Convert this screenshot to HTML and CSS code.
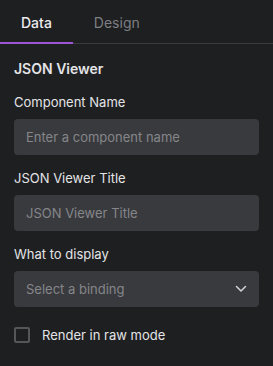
FILE: index.html
```html
<!DOCTYPE html>
<html lang="en">
<head>
    <meta charset="UTF-8">
    <meta name="viewport" content="width=device-width, initial-scale=1.0">
    <title>JSON Viewer</title>
    <link rel="stylesheet" href="styles.css">
</head>
<body>
    <div class="tabs">
        <div class="tab active">Data</div>
        <div class="tab">Design</div>
    </div>
    <div class="panel">
        <div class="heading">JSON Viewer</div>
        <div class="field">
            <label class="label">Component Name</label>
            <input class="input" type="text" placeholder="Enter a component name">
        </div>
        <div class="field">
            <label class="label">JSON Viewer Title</label>
            <input class="input" type="text" placeholder="JSON Viewer Title">
        </div>
        <div class="field">
            <label class="label">What to display</label>
            <div class="select">
                <span>Select a binding</span>
                <svg width="12" height="8" viewBox="0 0 12 8"><path d="M1.5 1.5 L6 6 L10.5 1.5" fill="none" stroke="#d4d4d8" stroke-width="1.5" stroke-linecap="round" stroke-linejoin="round"/></svg>
            </div>
        </div>
        <div class="check">
            <span class="box"></span>
            <span>Render in raw mode</span>
        </div>
    </div>
</body>
</html>
```

FILE: styles.css
```css
body {
    margin: 0;
    background-color: #1e1f21;
    color: #e4e4e7;
    font-family: Inter, "Noto Sans", sans-serif;
    font-size: 13px;
}
.tabs {
    display: flex;
    border-bottom: 1px solid #3a3b3e;
    height: 43px;
}
.tab {
    padding: 0 21px;
    line-height: 46px;
    font-size: 14px;
    font-weight: 400;
    color: #7d7e82;
}
.tab.active {
    color: #ececee;
    font-weight: 500;
    border-bottom: 2px solid #9b55d6;
    margin-bottom: -1px;
}
.panel {
    padding: 16px 14px;
}
.heading {
    font-size: 14px;
    font-weight: 600;
    color: #e4e4e7;
    margin-bottom: 17px;
}
.field {
    display: flex;
    flex-direction: column;
    margin-bottom: 15px;
}
.label {
    font-size: 13px;
    margin-bottom: 9px;
}
.input, .select {
    box-sizing: border-box;
    height: 36px;
    border: none;
    border-radius: 4px;
    background-color: #393a3e;
    padding: 0 12px;
    font-family: inherit;
    font-size: 13px;
    color: #e4e4e7;
    outline: none;
}
.input::placeholder {
    color: #85868a;
}
.select {
    display: flex;
    align-items: center;
    justify-content: space-between;
    color: #85868a;
    padding-right: 12px;
}
.check {
    display: flex;
    align-items: center;
    gap: 12px;
    margin-top: 20px;
}
.box {
    box-sizing: border-box;
    width: 16px;
    height: 16px;
    border: 2px solid #55565a;
    border-radius: 2px;
}
```
